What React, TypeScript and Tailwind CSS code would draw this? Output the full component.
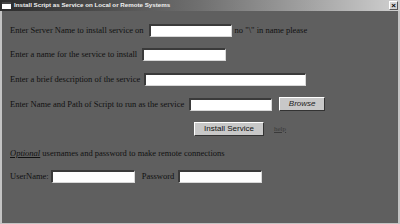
import React from "react";

const serif = { fontFamily: '"Liberation Serif", "Times New Roman", serif' };
const sans = { fontFamily: '"Liberation Sans", Arial, sans-serif' };

function Field({ w }: { w: string }) {
  return (
    <div
      className={`${w} h-[13px] bg-white border-t-[2px] border-l-[2px] border-b border-r border-t-[#3a3a3a] border-l-[#3a3a3a] border-b-[#d8d8d8] border-r-[#d8d8d8]`}
    />
  );
}

export default function App() {
  return (
    <div className="w-[400px] h-[224px] bg-[#c4c4c4] flex flex-col overflow-hidden" style={serif}>
      <div className="h-[11px] flex items-center bg-gradient-to-r from-[#2c2c2c] via-[#707070] to-[#d0d0d0] pl-[2px] pr-[2px]">
        <div className="w-[9px] h-[7px] bg-white border-t-[2px] border-[#444] mr-[3px]" />
        <span className="text-[6.2px] font-bold text-[#f0f0f0] leading-none" style={sans}>
          Install Script as Service on Local or Remote Systems
        </span>
        <div className="ml-auto w-[9px] h-[9px] bg-[#d4d4d4] border border-t-white border-l-white border-b-[#555] border-r-[#555] flex items-center justify-center text-[8px] leading-none font-bold text-black" style={sans}>
          ×
        </div>
      </div>
      <div className="flex-1 bg-[#5f5f5f] ml-[2px] mr-[2px] mb-[1px] pt-[12px] pl-[8px] text-[8.5px] text-[#111] leading-none">
        <div className="flex items-center h-[14px]">
          <span>Enter Server Name to install service on</span>
          <div className="ml-[5px]"><Field w="w-[83px]" /></div>
          <span className="ml-[3px]">no "\" in name please</span>
        </div>
        <div className="flex items-center h-[14px] mt-[10px]">
          <span>Enter a name for the service to install</span>
          <div className="ml-[5px]"><Field w="w-[84px]" /></div>
        </div>
        <div className="flex items-center h-[14px] mt-[11px]">
          <span>Enter a brief description of the service</span>
          <div className="ml-[4px]"><Field w="w-[162px]" /></div>
        </div>
        <div className="flex items-center h-[14px] mt-[11px]">
          <span>Enter Name and Path of Script to run as the service</span>
          <div className="ml-[5px]"><Field w="w-[83px]" /></div>
          <div className="ml-[7px] w-[46px] h-[14px] bg-[#c8c8c8] border border-t-white border-l-white border-b-[#333] border-r-[#333] flex items-center justify-center italic text-[8px] text-[#222]" style={sans}>
            Browse
          </div>
        </div>
        <div className="flex items-center h-[14px] mt-[11px]">
          <div className="ml-[184px] w-[70px] h-[14px] bg-[#c8c8c8] border border-t-white border-l-white border-b-[#333] border-r-[#333] flex items-center justify-center text-[8px] text-[#111]" style={sans}>
            Install Service
          </div>
          <span className="ml-[10px] underline text-[#3a3a3a] text-[7px]">help</span>
        </div>
        <div className="flex items-center h-[14px] mt-[10px]">
          <span><span className="italic underline">Optional</span> usernames and password to make remote connections</span>
        </div>
        <div className="flex items-center h-[14px] mt-[9px]">
          <span>UserName:</span>
          <div className="ml-[2px]"><Field w="w-[84px]" /></div>
          <span className="ml-[7px]">Password</span>
          <div className="ml-[4px]"><Field w="w-[84px]" /></div>
        </div>
      </div>
    </div>
  );
}
